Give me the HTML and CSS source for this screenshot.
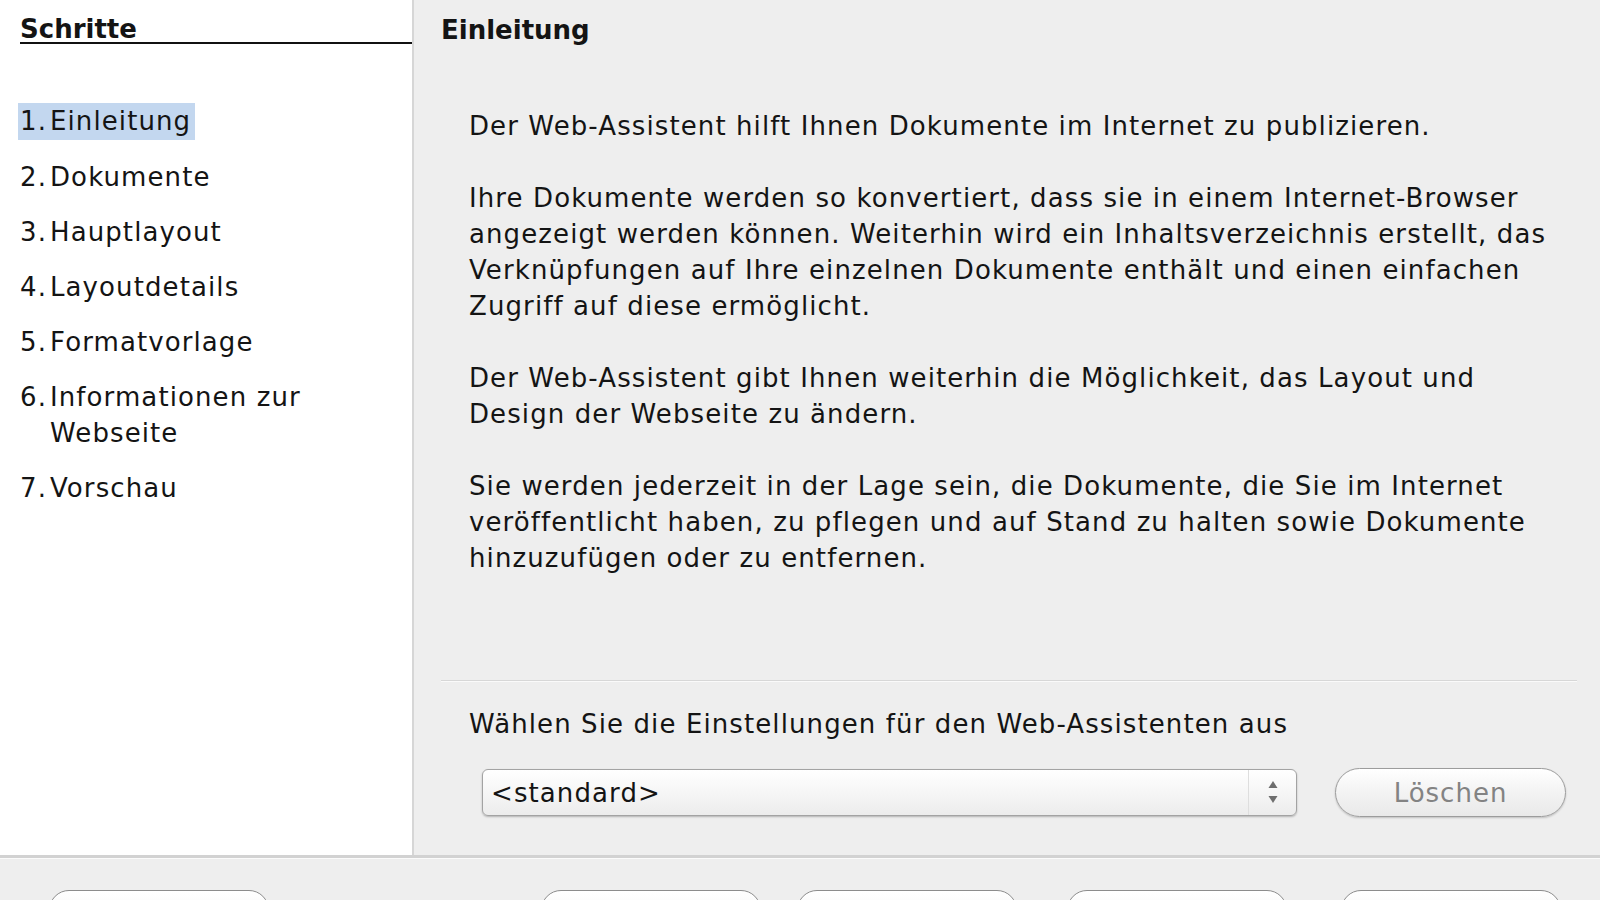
FILE: index.html
```html
<!DOCTYPE html>
<html lang="de">
<head>
    <meta charset="UTF-8">
    <title>Web-Assistent</title>
    <link rel="stylesheet" href="styles.css">
</head>
<body>
    <div class="wizard">
        <div class="wizard-body">
            <!-- Schritte links -->
            <div class="steps">
                <div class="steps-title">Schritte</div>
                <ul class="step-list">
                    <li class="step"><span class="step-inner active"><span class="num">1.</span><span class="label">Einleitung</span></span></li>
                    <li class="step"><span class="step-inner"><span class="num">2.</span><span class="label">Dokumente</span></span></li>
                    <li class="step"><span class="step-inner"><span class="num">3.</span><span class="label">Hauptlayout</span></span></li>
                    <li class="step"><span class="step-inner"><span class="num">4.</span><span class="label">Layoutdetails</span></span></li>
                    <li class="step"><span class="step-inner"><span class="num">5.</span><span class="label">Formatvorlage</span></span></li>
                    <li class="step"><span class="step-inner"><span class="num">6.</span><span class="label">Informationen zur Webseite</span></span></li>
                    <li class="step"><span class="step-inner"><span class="num">7.</span><span class="label">Vorschau</span></span></li>
                </ul>
            </div>

            <div class="page">
                <h2 class="page-title">Einleitung</h2>
                <div class="intro">
                    <p>Der Web-Assistent hilft Ihnen Dokumente im Internet zu publizieren.</p>
                    <p>Ihre Dokumente werden so konvertiert, dass sie in einem Internet-Browser<br>
                    angezeigt werden können. Weiterhin wird ein Inhaltsverzeichnis erstellt, das<br>
                    Verknüpfungen auf Ihre einzelnen Dokumente enthält und einen einfachen<br>
                    Zugriff auf diese ermöglicht.</p>
                    <p>Der Web-Assistent gibt Ihnen weiterhin die Möglichkeit, das Layout und<br>
                    Design der Webseite zu ändern.</p>
                    <p>Sie werden jederzeit in der Lage sein, die Dokumente, die Sie im Internet<br>
                    veröffentlicht haben, zu pflegen und auf Stand zu halten sowie Dokumente<br>
                    hinzuzufügen oder zu entfernen.</p>
                </div>
                <div class="settings">
                    <p class="settings-label">Wählen Sie die Einstellungen für den Web-Assistenten aus</p>
                    <div class="settings-row">
                        <div class="combo">
                            <span class="combo-value">&lt;standard&gt;</span>
                            <span class="combo-arrows">
                                <svg width="12" height="30" viewBox="0 0 12 30">
                                    <path d="M6 3 L10.5 10 L1.5 10 Z" fill="#6e6e6e"/>
                                    <path d="M1.5 18 L10.5 18 L6 25 Z" fill="#6e6e6e"/>
                                </svg>
                            </span>
                        </div>
                        <button class="pill-button" disabled>Löschen</button>
                    </div>
                </div>
            </div>
        </div>

        <!-- only the tops of the buttons are in view -->
        <div class="wizard-footer">
            <button class="footer-button help" aria-label="Hilfe"></button>
            <button class="footer-button back" aria-label="Zurück"></button>
            <button class="footer-button next" aria-label="Weiter"></button>
            <button class="footer-button finish" aria-label="Fertigstellen"></button>
            <button class="footer-button cancel" aria-label="Abbrechen"></button>
        </div>
    </div>
</body>
</html>
```

FILE: styles.css
```css
html, body {
    margin: 0;
    height: 100%;
    overflow: hidden;
}
body {
    font-family: "DejaVu Sans", "Liberation Sans", sans-serif;
    font-size: 26px;
    letter-spacing: 1.1px;
    color: #141414;
    background: #eeeeee;
}
.wizard {
    display: flex;
    flex-direction: column;
    height: 900px;
    overflow: hidden;
}
.wizard-body {
    display: flex;
    height: 855px;
    flex-shrink: 0;
}

/* left column */
.steps {
    width: 412px;
    background: #fff;
    border-right: 2px solid #d6d6d6;
}
.steps-title {
    margin-left: 20px;
    padding-top: 17px;
    line-height: 25px;
    font-weight: bold;
    letter-spacing: 0;
    border-bottom: 2px solid #111;
}
.step-list {
    list-style: none;
    margin: 59px 0 0 0;
    padding: 0 0 0 18px;
}
.step {
    margin-bottom: 19px;
    line-height: 36px;
}
.step-inner {
    display: inline-flex;
    padding: 0 4px 0 2px;
}
.step-inner.active {
    background: #c3d7ef;
    line-height: 37px;
}
.num {
    width: 30px;
    flex-shrink: 0;
}
.label {
    max-width: 300px;
}

/* right page */
.page {
    flex: 1;
    display: flex;
    flex-direction: column;
    padding: 0 23px 0 27px;
}
.page-title {
    margin: 0;
    padding-top: 12px;
    font-size: 26px;
    line-height: 36px;
    font-weight: bold;
    letter-spacing: 0;
}
.intro {
    flex: 1;
    padding: 60px 0 0 28px;
}
.intro p {
    margin: 0 0 36px 0;
    line-height: 36px;
    white-space: nowrap;
}
.settings {
    height: 174px;
    border-top: 1px solid #d7d7d7;
    box-shadow: inset 0 1px 0 #fafafa;
}
.settings-label {
    margin: 25px 0 0 28px;
    line-height: 36px;
}
.settings-row {
    display: flex;
    align-items: center;
    gap: 38px;
    margin: 26px 0 0 41px;
}
.combo {
    display: flex;
    align-items: center;
    width: 815px;
    height: 47px;
    box-sizing: border-box;
    border: 1px solid #a3a3a3;
    border-radius: 6px;
    background: linear-gradient(#ffffff, #f6f6f6 50%, #ececec);
    box-shadow: 0 1px 2px rgba(0, 0, 0, 0.25);
}
.combo-value {
    flex: 1;
    padding-left: 8px;
}
.combo-arrows {
    display: flex;
    align-items: center;
    justify-content: center;
    width: 47px;
    height: 100%;
    border-left: 1px solid #dedede;
}
.pill-button {
    width: 231px;
    height: 49px;
    font-family: inherit;
    font-size: 26px;
    letter-spacing: 1px;
    color: #838383;
    border: 1px solid #9c9c9c;
    border-radius: 25px;
    background: linear-gradient(#ffffff, #f3f3f3 50%, #e9e9e9);
    box-shadow: 0 1px 2px rgba(0, 0, 0, 0.2);
}

/* bottom buttons */
.wizard-footer {
    display: flex;
    border-top: 3px solid #d2d2d2;
    box-shadow: inset 0 1px 0 #fbfbfb;
    padding: 32px 0 0 49px;
}
.footer-button {
    width: 220px;
    height: 48px;
    flex-shrink: 0;
    border: 1px solid #8c8c8c;
    border-radius: 20px;
    background: linear-gradient(#ffffff, #f0f0f0);
}
.back {
    margin-left: 272px;
}
.next {
    margin-left: 36px;
}
.finish {
    margin-left: 50px;
}
.cancel {
    margin-left: 54px;
}
```
